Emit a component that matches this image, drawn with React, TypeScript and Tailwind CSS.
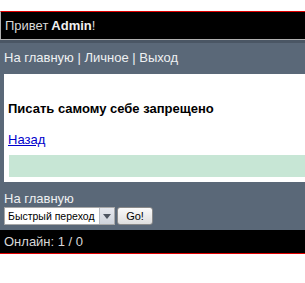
const App = () => {
  return (
    <div className="pt-[11px] bg-white font-['Liberation_Sans',Arial,sans-serif] text-[13px] leading-[15px]">
      {/* Header */}
      <div className="h-[29px] border-t border-t-[#e00000] border-l border-b border-l-[#b0b0b0] border-b-[#b0b0b0] bg-black flex items-center pl-[4px] text-[#d8d8d8]">
        Привет <b className="text-[#f0f0f0] ml-[3px]">Admin</b>!
      </div>

      <div className="bg-[#5a6878]">
        <div className="h-[3px] bg-[#4a5664]" />

        {/* Nav */}
        <div className="pt-[7px] pl-[4px] text-[#eef0f2] text-[13px] leading-[15px]">
          На главную | Личное | Выход
        </div>

        {/* Content */}
        <div className="mt-[9px] ml-[4px] bg-white pt-[27px] pb-[5px] pl-[4px]">
          <h2 className="font-bold text-[13px] leading-[15px] text-black">Писать самому себе запрещено</h2>
          <a href="#" className="block mt-[16px] text-[#0000cc] underline text-[13px] leading-[15px]">
            Назад
          </a>
          <div className="mt-[8px] ml-[1px] h-[22px] bg-[#c7e6d5]" />
        </div>

        {/* Quick jump */}
        <div className="pt-[9px] pb-[5px] pl-[4px]">
          <div className="text-[#eef0f2] text-[13px] leading-[15px]">На главную</div>
          <div className="flex items-center gap-[2px] mt-[1px]">
            <div className="flex h-[18px] w-[111px] border border-[#a8a8a8] bg-white">
              <div className="flex-1 flex items-center pl-[3px] text-[10.5px] leading-none text-black whitespace-nowrap overflow-hidden">
                Быстрый переход
              </div>
              <div className="w-[15px] flex items-center justify-center bg-gradient-to-b from-[#e6e9ef] to-[#cfd4dc] border-l border-[#b8bcc4]">
                <svg width="8" height="5" viewBox="0 0 8 5">
                  <path d="M0 0 L8 0 L4 5 Z" fill="#4d5560" />
                </svg>
              </div>
            </div>
            <button className="h-[18px] w-[36px] rounded-[3px] border border-[#8a8a8a] bg-gradient-to-b from-[#fbfbfb] to-[#dedede] text-[11px] leading-none text-black">
              Go!
            </button>
          </div>
        </div>
      </div>

      {/* Footer */}
      <div className="h-[24px] bg-black border-b border-b-[#e00000] flex items-center pl-[4px] text-[#d8d8d8] text-[13px]">
        Онлайн: 1 / 0
      </div>
    </div>
  );
};

export default App;
